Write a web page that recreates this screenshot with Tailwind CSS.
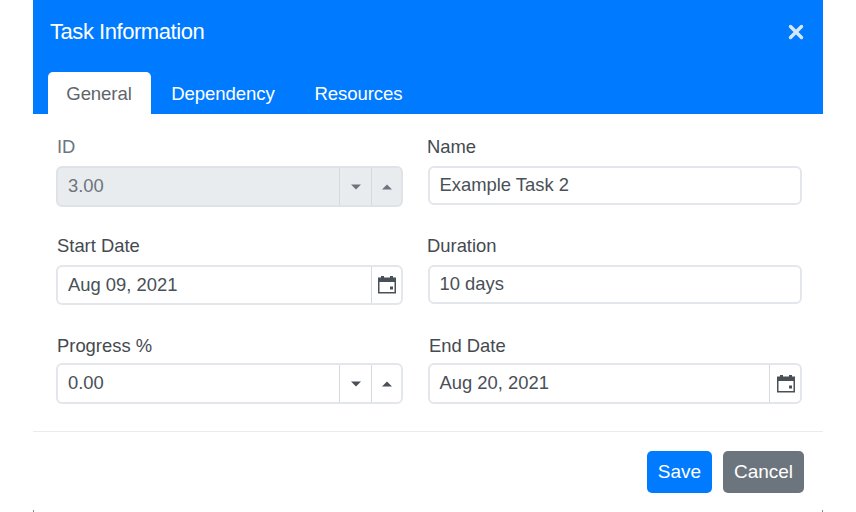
<!DOCTYPE html>
<html lang="en">
<head>
    <meta charset="UTF-8">
    <meta name="viewport" content="width=device-width, initial-scale=1.0">
    <title>Task Information</title>
    <script src="https://cdn.jsdelivr.net/npm/@tailwindcss/browser@4"></script>
</head>
<body class="bg-white h-[512px] overflow-hidden font-['Liberation_Sans',Arial,sans-serif]">
    <div class="relative ml-[32.5px] w-[790.5px] h-[512px] bg-white">
        <!-- Header -->
        <div class="bg-[#007bff] h-[114px] text-white">
            <div class="flex items-center justify-between h-[64px] pl-[17.5px] pr-[18px]">
                <h2 class="text-[22px] leading-none tracking-[-0.45px]">Task Information</h2>
                <svg class="w-[18px] h-[18px]" viewBox="0 0 18 18"><path d="M3.5 3.5L14.5 14.5M14.5 3.5L3.5 14.5" stroke="#d4e7fb" stroke-width="3.4" stroke-linecap="round"/></svg>
            </div>
            <div class="flex pl-[15.5px] pt-[8px] text-[18.6px] leading-[44px] tracking-[-0.1px]">
                <div class="w-[103px] h-[42px] pr-[1px] bg-white rounded-t-[5px] text-[#5f656b] text-center">General</div>
                <div class="w-[144px] h-[42px] text-center">Dependency</div>
                <div class="w-[127px] h-[42px] text-center">Resources</div>
            </div>
        </div>

        <!-- Form -->
        <div class="grid grid-cols-[347px_374px] gap-x-[25px] pl-[23.5px] pt-[22px] text-[18.4px] text-[#495057]">
            <div class="h-[99px]">
                <div class="h-[22px] leading-[22px] pl-[1px] text-[#6c757d] mb-[8px]">ID</div>
                <div class="flex h-[41px] border-2 border-[#dfe3e7] rounded-[6px] bg-[#e9ecef] text-[#6c757d]">
                    <div class="flex-1 pl-[10px] leading-[36px]">3.00</div>
                    <div class="w-[32px] border-l border-[#d6dade] flex items-center justify-center">
                        <svg class="w-[10px] h-[6px]" viewBox="0 0 10 6"><path d="M0 0.5H10L5 5.5Z" fill="#6c757d"/></svg>
                    </div>
                    <div class="w-[30px] border-l border-[#d6dade] flex items-center justify-center">
                        <svg class="w-[10px] h-[6px]" viewBox="0 0 10 6"><path d="M0 5.5H10L5 0.5Z" fill="#6c757d"/></svg>
                    </div>
                </div>
            </div>
            <div class="h-[99px]">
                <div class="h-[22px] leading-[22px] ml-[-1px] text-[#444a50] mb-[8px]">Name</div>
                <div class="h-[39px] border-2 border-[#e3e6ea] rounded-[6px] pl-[9.5px] leading-[33px]">Example Task 2</div>
            </div>

            <div class="h-[99px]">
                <div class="h-[22px] leading-[22px] pl-[1px] text-[#444a50] mb-[8px]">Start Date</div>
                <div class="flex h-[40px] border-2 border-[#e3e6ea] rounded-[6px]">
                    <div class="flex-1 pl-[10px] leading-[35px]">Aug 09, 2021</div>
                    <div class="w-[30px] pl-[1px] border-l border-[#d6dade] flex items-center justify-center">
                        <svg class="w-[20px] h-[20px]" viewBox="0 0 20 20"><path d="M1 2.5H4V1H7V2.5H13V1H16V2.5H19V18.5H1Z M2.5 7V17H17.5V7Z" fill-rule="evenodd" fill="#495057"/><rect x="13" y="11.5" width="3" height="3" fill="#495057"/></svg>
                    </div>
                </div>
            </div>
            <div class="h-[99px]">
                <div class="h-[22px] leading-[22px] ml-[-1px] text-[#444a50] mb-[8px]">Duration</div>
                <div class="h-[39px] border-2 border-[#e3e6ea] rounded-[6px] pl-[9.5px] leading-[33px]">10 days</div>
            </div>

            <div class="h-[99px] pt-[1px]">
                <div class="h-[22px] leading-[22px] pl-[1px] text-[#444a50] mb-[6px]">Progress %</div>
                <div class="flex h-[41px] border-2 border-[#e3e6ea] rounded-[6px]">
                    <div class="flex-1 pl-[10px] leading-[36px]">0.00</div>
                    <div class="w-[32px] border-l border-[#d6dade] flex items-center justify-center">
                        <svg class="w-[10px] h-[6px]" viewBox="0 0 10 6"><path d="M0 0.5H10L5 5.5Z" fill="#495057"/></svg>
                    </div>
                    <div class="w-[30px] border-l border-[#d6dade] flex items-center justify-center">
                        <svg class="w-[10px] h-[6px]" viewBox="0 0 10 6"><path d="M0 5.5H10L5 0.5Z" fill="#495057"/></svg>
                    </div>
                </div>
            </div>
            <div class="h-[99px] pt-[1px]">
                <div class="h-[22px] leading-[22px] pl-[1px] text-[#444a50] mb-[6px]">End Date</div>
                <div class="flex h-[41px] border-2 border-[#e3e6ea] rounded-[6px]">
                    <div class="flex-1 pl-[9.5px] leading-[36px]">Aug 20, 2021</div>
                    <div class="w-[31px] pl-[1px] border-l border-[#d6dade] flex items-center justify-center">
                        <svg class="w-[20px] h-[20px]" viewBox="0 0 20 20"><path d="M1 2.5H4V1H7V2.5H13V1H16V2.5H19V18.5H1Z M2.5 7V17H17.5V7Z" fill-rule="evenodd" fill="#495057"/><rect x="13" y="11.5" width="3" height="3" fill="#495057"/></svg>
                    </div>
                </div>
            </div>
        </div>

        <!-- Footer -->
        <div class="mt-[-2px] border-t border-[#e9ecef] flex justify-end gap-[11px] pt-[19px] pr-[19px] text-[19px] text-white">
            <div class="w-[65px] h-[42px] rounded-[5px] bg-[#007bff] flex items-center justify-center">Save</div>
            <div class="w-[81px] h-[42px] rounded-[5px] bg-[#6c757d] flex items-center justify-center">Cancel</div>
        </div>

        <!-- corner remnants of the dialog border -->
        <div class="absolute left-0 bottom-0 w-[1px] h-[2px] bg-[#888]"></div>
        <div class="absolute right-0 bottom-0 w-[1px] h-[2px] bg-[#888]"></div>
    </div>
</body>
</html>
